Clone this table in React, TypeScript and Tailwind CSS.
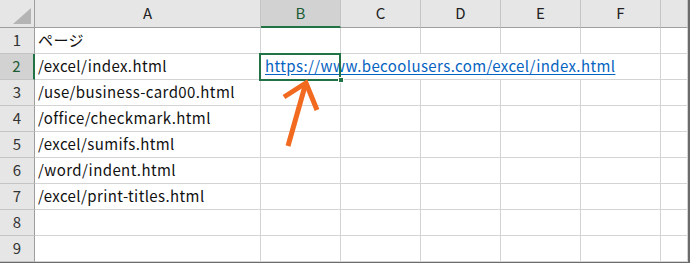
const columns = ["A", "B", "C", "D", "E", "F", ""];

const pages = [
  "ページ",
  "/excel/index.html",
  "/use/business-card00.html",
  "/office/checkmark.html",
  "/excel/sumifs.html",
  "/word/indent.html",
  "/excel/print-titles.html",
  "",
  "",
];

const font = { fontFamily: '"Noto Sans CJK JP", "Noto Sans", sans-serif' };

const Corner = () => (
  <div className="h-[28px] bg-[#e6e6e6] border-b border-r border-[#9e9e9e] relative">
    <svg className="absolute left-0 top-0" width="34" height="27" viewBox="0 0 34 27">
      <polygon points="31,8 31,24 13,24" fill="#b4b4b4" />
    </svg>
  </div>
);

const ColumnHeader = ({ label, active }: { label: string; active: boolean }) => (
  <div
    className={
      "h-[28px] flex items-center justify-center text-[15px] border-r border-[#c4c4c4] " +
      (active
        ? "bg-[#d2d2d2] text-[#1d5c34] border-b-2 border-b-[#217346]"
        : "bg-[#e6e6e6] text-[#222] border-b border-b-[#9e9e9e]")
    }
  >
    {label}
  </div>
);

const RowHeader = ({ n, active }: { n: number; active: boolean }) => (
  <div
    className={
      "h-[26px] flex items-center justify-center text-[15px] border-b border-[#c4c4c4] " +
      (active
        ? "bg-[#d2d2d2] text-[#1d5c34] border-r-2 border-r-[#217346]"
        : "bg-[#e6e6e6] text-[#333] border-r border-r-[#9e9e9e]")
    }
  >
    {n}
  </div>
);

const Cell = ({ children, className = "" }: { children?: React.ReactNode; className?: string }) => (
  <div className={"h-[26px] flex items-center border-b border-r border-[#d4d4d4] " + className}>{children}</div>
);

export default function App() {
  return (
    <div className="w-[690px] h-[263px] bg-white overflow-hidden relative" style={font}>
      <div className="grid grid-cols-[35px_226px_80px_80px_80px_80px_80px_1fr] border-r-2 border-b border-[#6b6b6b]">
        <Corner />
        {columns.map((c) => (
          <ColumnHeader key={c || "G"} label={c} active={c === "B"} />
        ))}

        {pages.map((page, i) => (
          <div key={i} className="contents">
            <RowHeader n={i + 1} active={i === 1} />
            <Cell className="pl-[3px] text-[15px] tracking-[0.4px] text-[#111] whitespace-nowrap">{page}</Cell>
            {i === 1 ? (
              <Cell className="col-span-5 relative pl-[4px] text-[15px] tracking-[0.4px] whitespace-nowrap">
                <span className="text-[#0563c1] underline underline-offset-2">
                  https://www.becoolusers.com/excel/index.html
                </span>
                {/* active cell frame with fill handle */}
                <div className="absolute left-[-2px] top-[-1px] w-[82px] h-[28px] border-2 border-[#217346]" />
                <div className="absolute left-[77px] top-[23px] w-[6px] h-[6px] bg-[#217346] border border-white" />
              </Cell>
            ) : (
              <>
                <Cell />
                <Cell />
                <Cell />
                <Cell />
                <Cell />
              </>
            )}
            <Cell />
          </div>
        ))}
      </div>

      <svg className="absolute left-0 top-0 pointer-events-none" width="690" height="263">
        <g stroke="#f26a1f" strokeWidth="5" strokeLinecap="butt" strokeLinejoin="miter" fill="none">
          <line x1="288" y1="146" x2="305" y2="86" />
          <polyline points="284,97 306,83 317,110" />
        </g>
      </svg>
    </div>
  );
}
